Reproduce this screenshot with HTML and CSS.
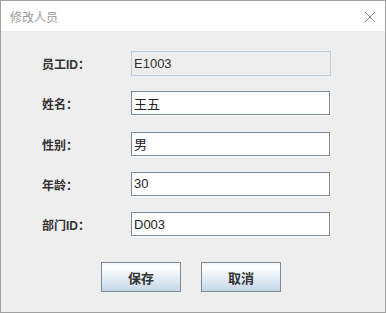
FILE: index.html
```html
<!DOCTYPE html>
<html lang="zh-CN">
<head>
  <meta charset="UTF-8" />
  <meta name="viewport" content="width=device-width, initial-scale=1.0" />
  <title>修改人员</title>
  <link rel="stylesheet" href="styles.css">
</head>
<body>
  <div class="window">
    <div class="title-bar">
      <span class="title">修改人员</span>
      <svg class="close" width="12" height="12" viewBox="0 0 12 12">
        <path d="M1 1 L11 11 M11 1 L1 11" stroke="#8a8a8a" stroke-width="1" fill="none" />
      </svg>
    </div>
    <div class="content">
      <form class="fields">
        <label>员工ID：</label>
        <div class="field readonly">E1003</div>
        <label>姓名：</label>
        <div class="field">王五</div>
        <label>性别：</label>
        <div class="field">男</div>
        <label>年龄：</label>
        <div class="field">30</div>
        <label>部门ID：</label>
        <div class="field">D003</div>
      </form>
      <div class="buttons">
        <button type="button">保存</button>
        <button type="button">取消</button>
      </div>
    </div>
  </div>
</body>
</html>
```

FILE: styles.css
```css
body, html {
  margin: 0;
  padding: 0;
  font-family: "Liberation Sans", "Noto Sans CJK SC", sans-serif;
  overflow: hidden;
}
.window {
  width: 386px;
  height: 313px;
  box-sizing: border-box;
  border: 1px solid #a0a0a0;
  background: #eeeeee;
}
.title-bar {
  height: 30px;
  background: #ffffff;
  display: flex;
  align-items: center;
  justify-content: space-between;
  padding: 0 9px 0 9px;
}
.title {
  font-size: 12px;
  color: #9a9a9a;
}
.close {
  margin-top: 1px;
}
.content {
  padding-top: 20px;
}
.fields {
  display: grid;
  grid-template-columns: 89px 200px;
  grid-auto-rows: 25px;
  row-gap: 15.3px;
  padding-left: 41px;
  margin: 0;
}
.fields label {
  display: flex;
  align-items: center;
  font-size: 12px;
  font-weight: bold;
  color: #333333;
}
.field {
  width: 199px;
  height: 24px;
  box-sizing: border-box;
  border: 1px solid #7a8a99;
  box-shadow: 1px 1px 0 #ffffff;
  background: #ffffff;
  display: flex;
  align-items: center;
  padding-left: 2px;
  font-size: 13px;
  color: #222222;
}
.field.readonly {
  width: 200px;
  height: 25px;
  border-color: #b8cfe5;
  box-shadow: none;
  background: #eeeeee;
  color: #333333;
}
.buttons {
  display: flex;
  gap: 20px;
  padding-left: 100px;
  margin-top: 25px;
}
.buttons button {
  width: 80px;
  height: 30px;
  border: 1px solid #7a8a99;
  border-radius: 0;
  background: linear-gradient(#f0f4f9, #ffffff 15%, #e3ecf5 55%, #c6d7e9);
  font-family: inherit;
  font-size: 13px;
  font-weight: bold;
  color: #333333;
  padding: 0;
}
```
